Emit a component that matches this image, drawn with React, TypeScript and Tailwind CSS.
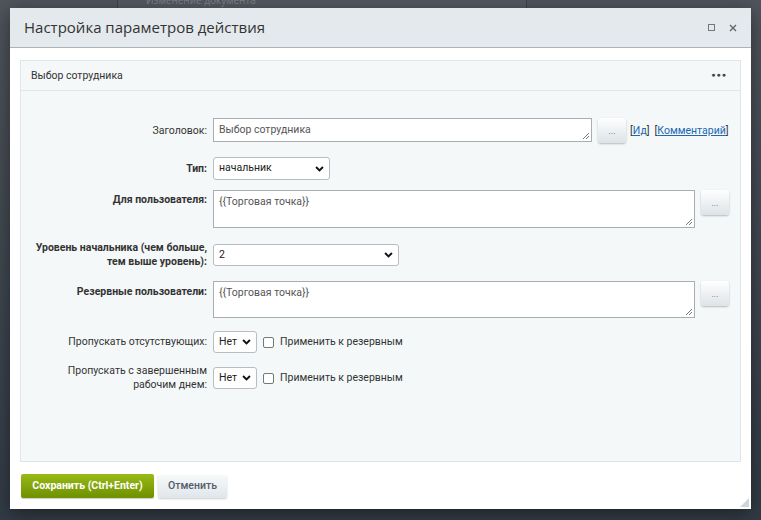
import React from "react";

const font = { fontFamily: '"Open Sans", "Noto Sans", sans-serif' };
const body = { fontFamily: 'Roboto, "Open Sans", sans-serif' };

function Chevron() {
  return (
    <svg width="9" height="6" viewBox="0 0 10 7" className="pointer-events-none absolute right-[5px] top-1/2 -translate-y-1/2">
      <path d="M1 1.2 L5 5.2 L9 1.2" fill="none" stroke="#111" strokeWidth="2.2" />
    </svg>
  );
}

function Select({ value, w }: { value: string; w: string }) {
  return (
    <div className={`relative h-[22px] ${w} rounded-[3px] border border-[#b6bdc3] bg-white`}>
      <div className="pl-[5px] text-[10.5px] leading-[20px] text-[#222]">{value}</div>
      <Chevron />
    </div>
  );
}

function DotsButton() {
  return (
    <button className="h-[25px] w-[28px] shrink-0 rounded-[3px] bg-gradient-to-b from-[#ffffff] to-[#dde3e7] text-[9px] leading-[20px] text-[#666] shadow-[0_1px_2px_rgba(0,0,0,0.25)]">
      ...
    </button>
  );
}

function Area({ value, w, h }: { value: string; w: string; h: string }) {
  return (
    <div className={`relative shrink-0 ${w} ${h} border border-[#a9aeb3] bg-white`}>
      <div className="pl-[5px] pt-[4px] text-[10.5px] leading-[14px] text-[#555]">{value}</div>
      <svg width="8" height="8" viewBox="0 0 8 8" className="absolute bottom-[1px] right-[1px]">
        <path d="M7 1 L1 7 M7 4 L4 7" stroke="#777" strokeWidth="1" />
      </svg>
    </div>
  );
}

function Check() {
  return <span className="inline-block h-[11px] w-[11px] shrink-0 rounded-[2px] border border-[#777] bg-white" />;
}

export default function App() {
  return (
    <div
      style={font}
      className="relative h-[520px] w-[761px] overflow-hidden bg-gradient-to-b from-[#50555d] to-[#323b45]"
    >
      {/* window behind the dialog */}
      <div className="absolute left-[117px] top-0 h-[10px] w-[410px] overflow-hidden border-x border-[#3e434a] bg-[#555a62]">
        <span className="absolute left-[28px] top-[-6px] whitespace-nowrap text-[10px] leading-[12px] text-[#7e838a]">Изменение документа</span>
      </div>

      <div className="absolute left-[10px] top-[8px] flex h-[501px] w-[741px] flex-col bg-white shadow-[0_4px_18px_rgba(0,0,0,0.45)]">
        {/* title bar */}
        <div className="flex h-[40px] shrink-0 items-center justify-between border-b border-[#aab3b8] bg-[#e3e9ec] pl-[14px] pr-[14px]">
          <span className="text-[15px] text-[#333]">Настройка параметров действия</span>
          <div className="flex items-center gap-[14px]">
            <span className="block h-[7px] w-[7px] border border-[#777]" />
            <svg width="8" height="8" viewBox="0 0 8 8">
              <path d="M1 1 L7 7 M7 1 L1 7" stroke="#666" strokeWidth="1.4" />
            </svg>
          </div>
        </div>

        {/* panel */}
        <div style={body} className="mx-[10px] mt-[12px] flex h-[402px] shrink-0 flex-col border border-[#dfe5e8] bg-[#f5f8f9]">
          <div className="flex h-[30px] items-center justify-between border-b border-[#e0e6e9] pl-[10px] pr-[13px]">
            <span className="text-[10.5px] text-[#333]">Выбор сотрудника</span>
            <span className="text-[7px] tracking-[1px] text-[#444]">●●●</span>
          </div>

          <div className="grid grid-cols-[186px_1fr] gap-x-[6px] text-[10.5px] text-[#333]">
            {/* Заголовок */}
            <div className="mt-[27px] flex items-center justify-end">Заголовок:</div>
            <div className="mt-[27px] flex items-start gap-[6px]">
              <Area value="Выбор сотрудника" w="w-[379px]" h="h-[24px]" />
              <DotsButton />
              <div className="ml-[-2px] mt-[5px] flex gap-[5px] whitespace-nowrap text-[10.5px]">
                <span>
                  [<span className="text-[#2067b0] underline">Ид</span>]
                </span>
                <span>
                  [<span className="text-[#2067b0] underline">Комментарий</span>]
                </span>
              </div>
            </div>

            {/* Тип */}
            <div className="mt-[14px] flex items-center justify-end font-bold">Тип:</div>
            <div className="mt-[14px]">
              <Select value="начальник" w="w-[117px] h-[23px]" />
            </div>

            {/* Для пользователя */}
            <div className="mt-[10px] pt-[2px] text-right font-bold">Для пользователя:</div>
            <div className="mt-[10px] flex items-start gap-[6px]">
              <Area value="{{Торговая точка}}" w="w-[482px]" h="h-[38px]" />
              <DotsButton />
            </div>

            {/* Уровень */}
            <div className="mt-[13px] flex items-center justify-end whitespace-nowrap text-right font-bold leading-[14px]">
              <span>
                Уровень начальника (чем больше,
                <br />
                тем выше уровень):
              </span>
            </div>
            <div className="mt-[13px] flex items-center">
              <Select value="2" w="w-[186px]" />
            </div>

            {/* Резервные */}
            <div className="mt-[12px] pt-[3px] text-right font-bold">Резервные пользователи:</div>
            <div className="mt-[12px] flex items-start gap-[6px]">
              <Area value="{{Торговая точка}}" w="w-[482px]" h="h-[37px]" />
              <DotsButton />
            </div>

            {/* Пропускать отсутствующих */}
            <div className="mt-[13px] flex items-center justify-end whitespace-nowrap">Пропускать отсутствующих:</div>
            <div className="mt-[13px] flex items-center gap-[6px]">
              <Select value="Нет" w="w-[44px]" />
              <Check />
              <span>Применить к резервным</span>
            </div>

            {/* Пропускать с завершенным */}
            <div className="mt-[11px] flex items-center justify-end whitespace-nowrap text-right leading-[14px]">
              <span>
                Пропускать с завершенным
                <br />
                рабочим днем:
              </span>
            </div>
            <div className="mt-[11px] flex items-center gap-[6px]">
              <Select value="Нет" w="w-[44px]" />
              <Check />
              <span>Применить к резервным</span>
            </div>
          </div>
        </div>

        {/* footer */}
        <div style={body} className="mt-[12px] flex items-center gap-[4px] pl-[11px]">
          <button className="h-[24px] w-[133px] rounded-[2px] bg-gradient-to-b from-[#99ba17] to-[#6f9000] text-[10.5px] font-bold text-white shadow-[0_1px_1px_rgba(0,0,0,0.2)]">
            Сохранить (Ctrl+Enter)
          </button>
          <button className="h-[23px] w-[69px] rounded-[2px] bg-gradient-to-b from-[#f7f9fa] to-[#dfe6ea] text-[10.5px] font-medium text-[#535c69] shadow-[0_1px_2px_rgba(0,0,0,0.2)]">
            Отменить
          </button>
        </div>

        <svg width="9" height="9" viewBox="0 0 9 9" className="absolute bottom-[2px] right-[2px]">
          <path d="M9 0 L9 9 L0 9 Z" fill="#cfd4d8" />
        </svg>
      </div>
    </div>
  );
}
